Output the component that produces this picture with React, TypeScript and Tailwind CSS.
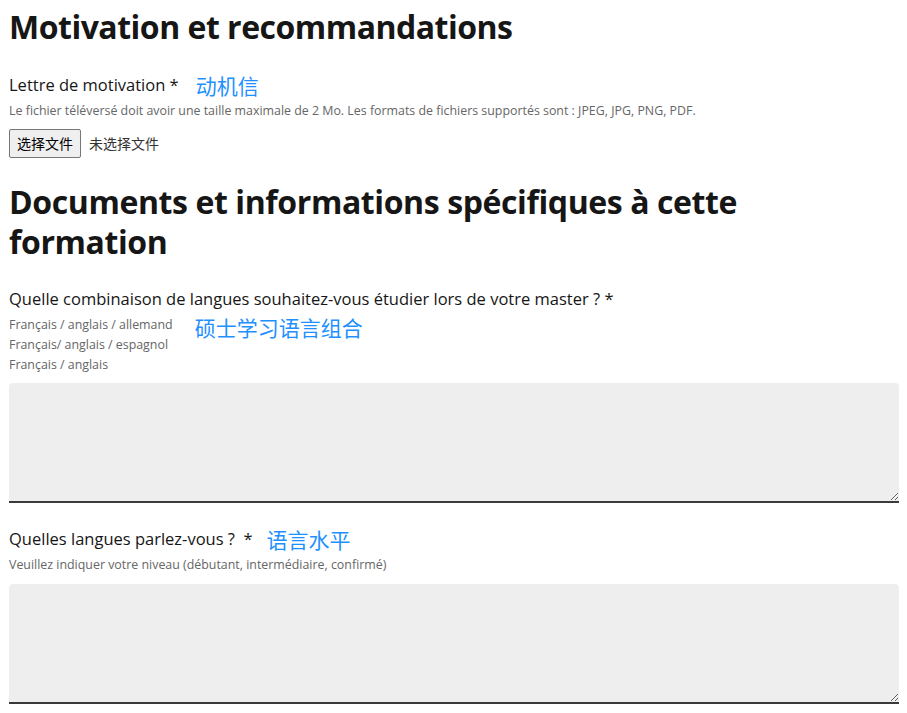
const font = { fontFamily: '"Open Sans", "Noto Sans CJK SC", sans-serif' };

function Note({ children, className = '' }: { children: React.ReactNode; className?: string }) {
  return (
    <span className={`text-[21px] leading-6 text-[#1e90ff] ${className}`} style={{ fontFamily: '"Noto Sans CJK SC", sans-serif' }}>
      {children}
    </span>
  );
}

export default function App() {
  return (
    <div className="bg-white text-[#161616] pl-[9px] pr-2 pt-[7px] min-h-[713px]" style={font}>
      {/* Motivation */}
      <h2 className="text-[32px] leading-10 font-bold tracking-[-0.5px]">Motivation et recommandations</h2>

      <div className="mt-[26px]">
        <div className="flex items-center">
          <label className="text-[16.5px] leading-6">Lettre de motivation *</label>
          <Note className="ml-[17px]">动机信</Note>
        </div>
        <p className="text-[12.4px] leading-5 text-[#666] mt-[4px]">
          Le fichier téléversé doit avoir une taille maximale de 2 Mo. Les formats de fichiers supportés sont : JPEG, JPG, PNG, PDF.
        </p>
        <div className="flex items-center mt-[8px] text-[14px]" style={{ fontFamily: '"Noto Sans CJK SC", sans-serif' }}>
          <button className="h-[29px] px-[7px] border border-[#767676] rounded-[2px] bg-[#efefef] text-black">选择文件</button>
          <span className="ml-[8px] text-[#333]">未选择文件</span>
        </div>
      </div>

      {/* Documents */}
      <h2 className="text-[32px] leading-10 font-bold tracking-[-0.4px] mt-[24px] max-w-[870px]">
        Documents et informations spécifiques à cette formation
      </h2>

      <div className="mt-[25px]">
        <label className="block text-[16.5px] leading-6">
          Quelle combinaison de langues souhaitez-vous étudier lors de votre master ? *
        </label>
        <div className="flex items-start mt-[4px]">
          <div className="text-[12.4px] leading-5 text-[#666]">
            <div>Français / anglais / allemand</div>
            <div>Français/ anglais / espagnol</div>
            <div>Français / anglais</div>
          </div>
          <Note className="ml-[22px]">硕士学习语言组合</Note>
        </div>
        <textarea className="block w-full h-[120px] mt-[8px] bg-[#eeeeee] rounded-t-[4px] border-b-2 border-[#3a3a3a] resize-y" />
      </div>

      <div className="mt-[24px]">
        <div className="flex items-center">
          <label className="text-[16.5px] leading-6">Quelles langues parlez-vous ?&nbsp; *</label>
          <Note className="ml-[14px]">语言水平</Note>
        </div>
        <p className="text-[12.4px] leading-5 text-[#666] mt-[4px]">
          Veuillez indiquer votre niveau (débutant, intermédiaire, confirmé)
        </p>
        <textarea className="block w-full h-[120px] mt-[9px] bg-[#eeeeee] rounded-t-[4px] border-b-2 border-[#3a3a3a] resize-y" />
      </div>
    </div>
  );
}
